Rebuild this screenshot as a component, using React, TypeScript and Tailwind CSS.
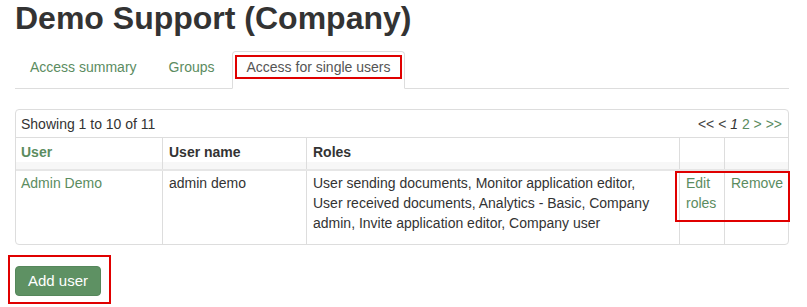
import React from "react";

const green = "text-[#5b8c5f]";

const roles =
  "User sending documents, Monitor application editor, User received documents, Analytics - Basic, Company admin, Invite application editor, Company user";

function Tab({ label, active }: { label: string; active?: boolean }) {
  return (
    <li className="mr-[2px] -mb-px">
      <div
        className={`rounded-t-[4px] border px-[2px] pt-[3px] pb-[9px] ${
          active ? "border-[#ddd] border-b-white bg-white text-[#555]" : `border-transparent ${green}`
        }`}
      >
        <span className={`block border-2 px-[10px] leading-5 ${active ? "border-[#e00000]" : "border-transparent"}`}>
          {label}
        </span>
      </div>
    </li>
  );
}

export default function App() {
  return (
    <div
      className="min-h-[307px] w-[807px] bg-white pl-[15px] text-[14px] leading-5 text-[#333]"
      style={{ fontFamily: '"Liberation Sans", Arial, sans-serif' }}
    >
      <h1 className="pt-px text-[32px] font-bold leading-[35px] text-[#333]">Demo Support (Company)</h1>

      <ul className="mt-[15px] flex w-[774px] border-b border-[#ddd]">
        <Tab label="Access summary" />
        <Tab label="Groups" />
        <Tab label="Access for single users" active />
      </ul>

      <div className="relative mt-[20px] w-[774px] rounded-[4px] border border-[#ddd]">
        <div className="flex h-[28px] items-center justify-between border-b border-[#ddd] px-[5px]">
          <span>Showing 1 to 10 of 11</span>
          <span className="pr-px">
            <span className="text-[#444]">&lt;&lt; &lt; </span>
            <span className="italic">1</span> <span className={green}>2</span>{" "}
            <span className={green}>&gt; &gt;&gt;</span>
          </span>
        </div>

        <div className="grid grid-cols-[146px_144px_373px_45px_1fr] font-bold shadow-[inset_0_-7px_0_#f7f7f7]">
          <div className={`h-[31px] px-[5px] pt-[4px] ${green}`}>User</div>
          <div className="border-l border-[#ddd] px-[6px] pt-[4px]">User name</div>
          <div className="border-l border-[#ddd] px-[6px] pt-[4px]">Roles</div>
          <div className="border-l border-[#ddd]" />
          <div className="border-l border-[#ddd]" />
        </div>

        <div className="grid grid-cols-[146px_144px_373px_45px_1fr] border-t-2 border-[#e6e6e6]">
          <div className={`px-[5px] pt-[2px] pb-[11px] ${green}`}>Admin Demo</div>
          <div className="border-l border-[#ddd] px-[6px] pt-[2px] pb-[11px]">admin demo</div>
          <div className="border-l border-[#ddd] pl-[6px] pr-[18px] pt-[2px] pb-[11px]">{roles}</div>
          <div className={`border-l border-[#ddd] px-[6px] pt-[2px] pb-[11px] ${green}`}>Edit roles</div>
          <div className={`border-l border-[#ddd] px-[6px] pt-[2px] pb-[11px] ${green}`}>Remove</div>
        </div>

        <div className="pointer-events-none absolute left-[659px] top-[61px] h-[51px] w-[115px] border-2 border-[#e00000]" />
      </div>

      <div className="ml-[-7px] mt-[10px] inline-block border-2 border-[#e00000] pt-[9px] pr-[8px] pb-[6px] pl-[5px]">
        <button
          type="button"
          className="block rounded-[4px] border border-[#55875b] bg-[#5e9163] px-[12px] py-[4px] text-[15px] leading-5 text-white"
        >
          Add user
        </button>
      </div>
    </div>
  );
}
